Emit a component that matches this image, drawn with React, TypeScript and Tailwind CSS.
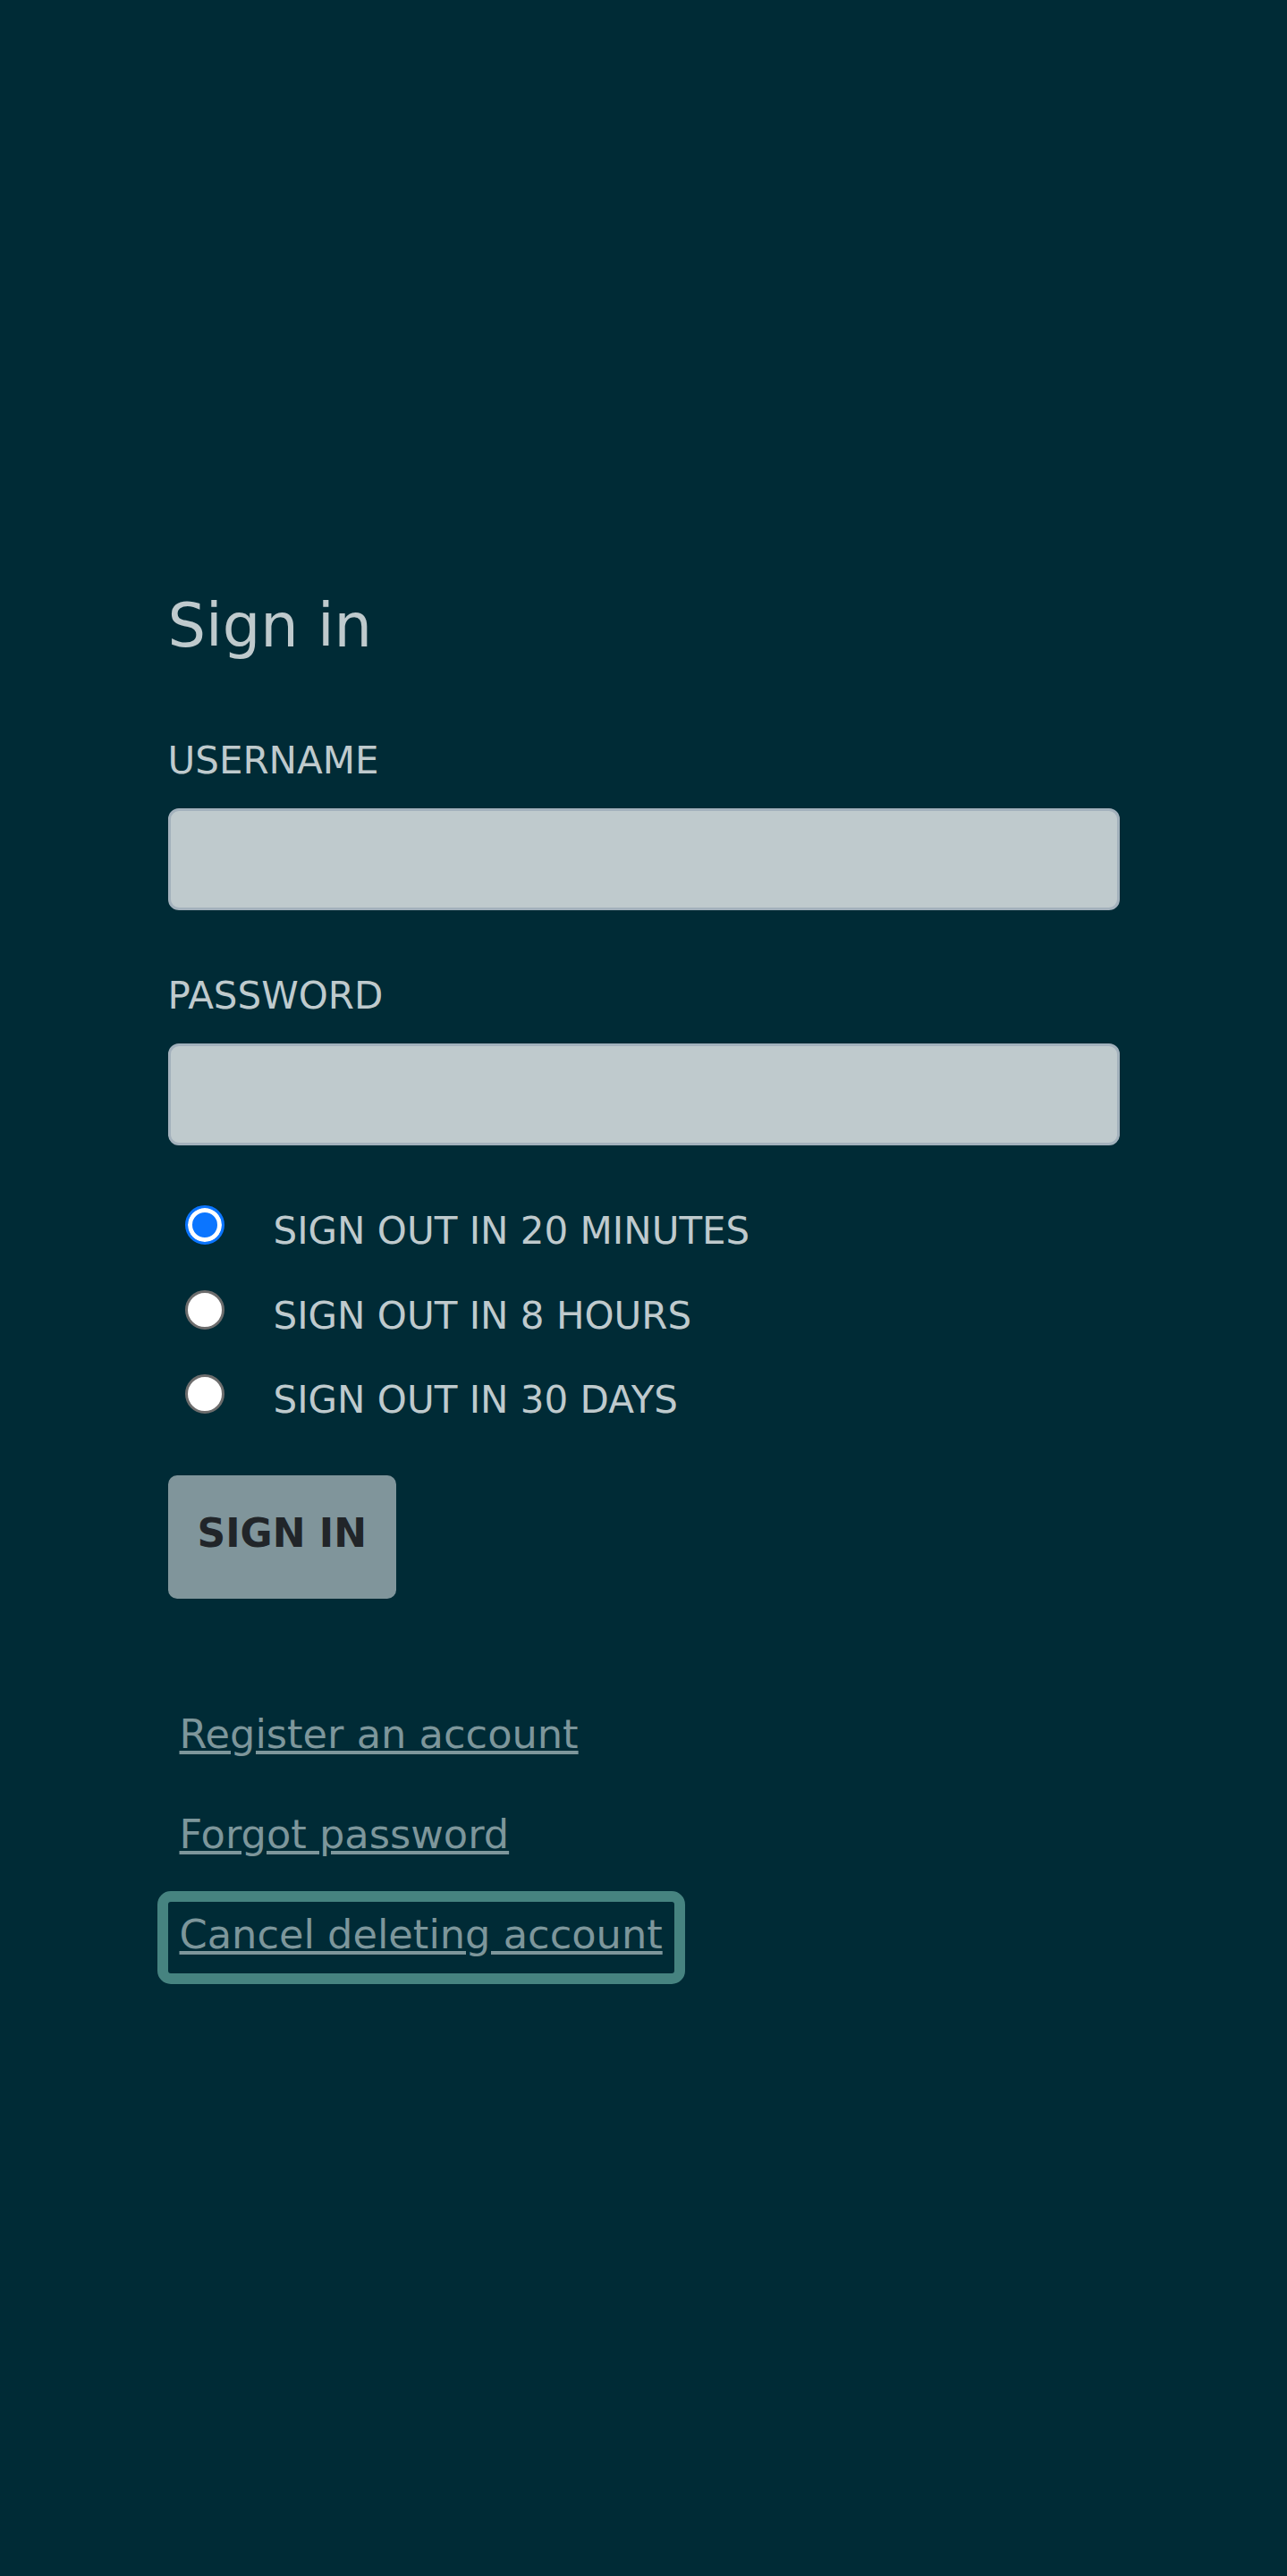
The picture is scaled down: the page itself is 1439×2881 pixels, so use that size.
import React from "react";

const radios = [
  { id: "r20m", label: "SIGN OUT IN 20 MINUTES", checked: true },
  { id: "r8h", label: "SIGN OUT IN 8 HOURS", checked: false },
  { id: "r30d", label: "SIGN OUT IN 30 DAYS", checked: false },
];

export default function App() {
  return (
    <div className="min-h-[2881px] w-full bg-[#002b36] font-['DejaVu_Sans',sans-serif] text-[#bfcacd]">
      <div className="mx-auto w-[1064px] pt-[660px]">
        <h1 className="text-[67px] leading-[80px] font-normal">Sign in</h1>

        <label htmlFor="username" className="mt-[86px] block text-[42px] leading-[50px]">
          USERNAME
        </label>
        <input
          id="username"
          type="text"
          className="mt-[28px] block h-[114px] w-full rounded-[12px] border-[3px] border-[#a3b1bc] bg-[#bfcacd] outline-none"
        />

        <label htmlFor="password" className="mt-[71px] block text-[42px] leading-[50px]">
          PASSWORD
        </label>
        <input
          id="password"
          type="password"
          className="mt-[28px] block h-[114px] w-full rounded-[12px] border-[3px] border-[#a3b1bc] bg-[#bfcacd] outline-none"
        />

        <div className="mt-[67px] flex flex-col">
          {radios.map((r) => (
            <label key={r.id} htmlFor={r.id} className="flex h-[94.5px] items-start">
              <input
                id={r.id}
                type="radio"
                name="duration"
                defaultChecked={r.checked}
                className="ml-[19px] h-[44px] w-[44px] shrink-0 appearance-none rounded-full border-[3px] border-[#6d6d6d] bg-white checked:border-[#0b75ff] checked:bg-[#0b75ff] checked:shadow-[inset_0_0_0_5px_#ffffff]"
              />
              <span className="ml-[55px] mt-[4px] text-[42px] leading-[50px]">{r.label}</span>
            </label>
          ))}
        </div>

        <button
          type="button"
          className="mt-[18px] block rounded-[10px] bg-[#80959b] px-[33px] pt-[40px] pb-[48px] text-[44px] leading-[50px] font-bold text-[#212529]"
        >
          SIGN IN
        </button>

        <div className="mt-[115px] flex flex-col items-start gap-[32px]">
          <a href="#" className="block h-[80px] px-[13px] text-[44.7px] leading-[75px] text-[#7d969b] underline">
            Register an account
          </a>
          <a href="#" className="block h-[80px] px-[13px] text-[44.7px] leading-[75px] text-[#7d969b] underline">
            Forgot password
          </a>
          <a
            href="#"
            className="block h-[80px] rounded-[3px] px-[13px] text-[44.7px] leading-[75px] text-[#7d969b] underline outline-[12px] outline-solid outline-[#468380] [outline-offset:0px]"
          >
            Cancel deleting account
          </a>
        </div>
      </div>
    </div>
  );
}
